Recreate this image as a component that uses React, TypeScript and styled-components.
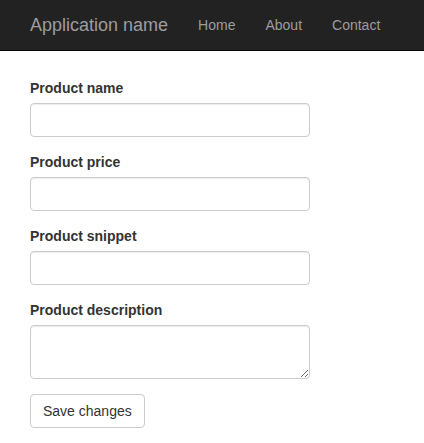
import React from 'react';
import styled, { createGlobalStyle } from 'styled-components';

const GlobalStyle = createGlobalStyle`
  * {
    box-sizing: border-box;
  }

  body {
    margin: 0;
    background: #fff;
    font-family: 'Liberation Sans', Arial, Helvetica, sans-serif;
    font-size: 14px;
    line-height: 20px;
    color: #333;
  }
`;

const fields = [
  { id: 'name', label: 'Product name' },
  { id: 'price', label: 'Product price' },
  { id: 'snippet', label: 'Product snippet' },
];

const App: React.FC = () => {
  return (
    <>
      <GlobalStyle />
      <Navbar>
        <Brand href="#">Application name</Brand>
        <Nav>
          <NavLink href="#">Home</NavLink>
          <NavLink href="#">About</NavLink>
          <NavLink href="#">Contact</NavLink>
        </Nav>
      </Navbar>
      <Content>
        <form onSubmit={(e) => e.preventDefault()}>
          {fields.map((f) => (
            <FormGroup key={f.id}>
              <Label htmlFor={f.id}>{f.label}</Label>
              <Input id={f.id} type="text" />
            </FormGroup>
          ))}
          <FormGroup>
            <Label htmlFor="description">Product description</Label>
            <TextArea id="description" rows={2} />
          </FormGroup>
          <Button type="submit">Save changes</Button>
        </form>
      </Content>
    </>
  );
};

export default App;

const Navbar = styled.nav`
  display: flex;
  align-items: center;
  height: 51px;
  padding: 0 15px;
  background: #222;
  border-bottom: 1px solid #080808;
`;

const Brand = styled.a`
  padding: 15px;
  font-size: 18px;
  line-height: 20px;
  color: #9d9d9d;
  text-decoration: none;
`;

const Nav = styled.div`
  display: flex;
`;

const NavLink = styled.a`
  padding: 15px;
  font-size: 14px;
  line-height: 20px;
  color: #9d9d9d;
  text-decoration: none;
`;

const Content = styled.div`
  padding: 27px 30px 0;
`;

const FormGroup = styled.div`
  margin-bottom: 15px;
`;

const Label = styled.label`
  display: inline-block;
  margin-bottom: 5px;
  font-weight: bold;
`;

const fieldStyle = `
  display: block;
  width: 280px;
  padding: 6px 12px;
  font-family: 'Liberation Sans', Arial, sans-serif;
  font-size: 14px;
  line-height: 20px;
  color: #555;
  background: #fff;
  border: 1px solid #ccc;
  border-radius: 4px;
  box-shadow: inset 0 1px 1px rgba(0, 0, 0, 0.075);
  outline: none;
`;

const Input = styled.input`
  ${fieldStyle}
  height: 34px;
`;

const TextArea = styled.textarea`
  ${fieldStyle}
  height: 54px;
  margin: 0;
`;

const Button = styled.button`
  display: inline-block;
  height: 34px;
  padding: 6px 12px;
  font-family: 'Liberation Sans', Arial, sans-serif;
  font-size: 14px;
  line-height: 20px;
  color: #333;
  background: #fff;
  border: 1px solid #ccc;
  border-radius: 4px;
  cursor: pointer;
`;
